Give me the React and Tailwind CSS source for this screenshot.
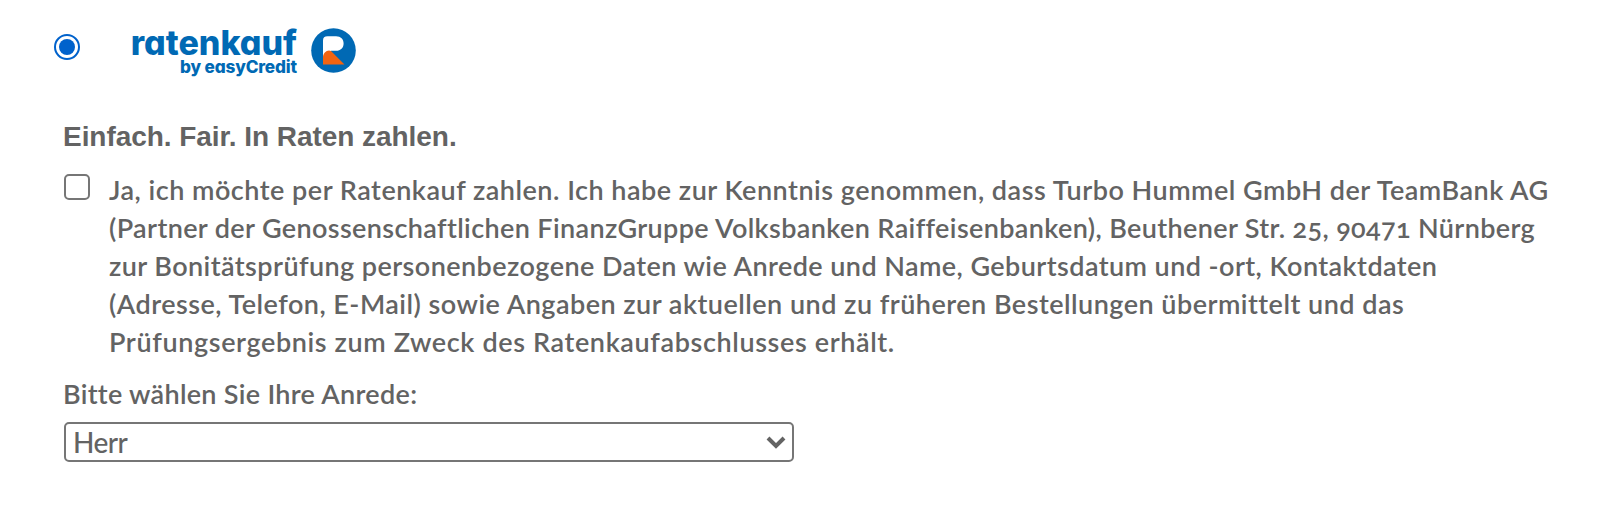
const consentLines = [
  { text: "Ja, ich möchte per Ratenkauf zahlen. Ich habe zur Kenntnis genommen, dass Turbo Hummel GmbH der TeamBank AG", tracking: "tracking-[0.5px]" },
  { text: "(Partner der Genossenschaftlichen FinanzGruppe Volksbanken Raiffeisenbanken), Beuthener Str. 25, 90471 Nürnberg", tracking: "tracking-[0.37px]" },
  { text: "zur Bonitätsprüfung personenbezogene Daten wie Anrede und Name, Geburtsdatum und -ort, Kontaktdaten", tracking: "tracking-[0.43px]" },
  { text: "(Adresse, Telefon, E-Mail) sowie Angaben zur aktuellen und zu früheren Bestellungen übermittelt und das", tracking: "tracking-[0.48px]" },
  { text: "Prüfungsergebnis zum Zweck des Ratenkaufabschlusses erhält.", tracking: "tracking-[0.62px]" },
];

function Logo() {
  return (
    <div className="flex text-[#0069b4] font-['Inter',sans-serif] [font-feature-settings:'cv11']">
      <div className="flex w-[166px] flex-col items-end pt-[4px] whitespace-nowrap">
        <span className="h-[31px] text-[34px] leading-[34px] font-extrabold">ratenkauf</span>
        <span className="text-[17.2px] leading-[20px] font-extrabold tracking-[-0.15px]">by easyCredit</span>
      </div>
      <svg className="mt-[6px] ml-[14px] size-[45px]" viewBox="0 0 45 45" aria-hidden="true">
        <circle cx="22.5" cy="22.5" r="22.3" fill="#0069b4" />
        <path d="M12 36V12.500Q12 8.300 16.500 8.300H25C29.800 8.300 32.600 11.300 32.600 15.500C32.600 19.800 29.800 22.800 25 22.800H20L14 30Z" fill="#fff" />
        <path d="M12 36.500V29.500C12 25.500 15 22.600 18 22.600C19.500 22.600 20.500 23.400 21.500 24.500L33.500 36.500Z" fill="#f26411" />
      </svg>
    </div>
  );
}

export default function App() {
  return (
    <main className="h-[508px] w-[1612px] overflow-hidden bg-white font-['Lato',sans-serif] text-[#636363]">
      <header className="flex h-[78px] pt-[22px] pl-[54px]">
        <label className="mt-[12px] mr-[51px] flex size-[26px] items-center justify-center rounded-full border-2 border-[#0062cc]">
          <span className="size-4 rounded-full bg-[#0062cc]" />
        </label>
        <Logo />
      </header>

      <section className="pt-[43px] pl-[63px]">
        <h2 className="h-[32px] font-['Liberation_Sans',sans-serif] text-[28px] leading-[32px] font-bold tracking-[-0.05px]">
          Einfach. Fair. In Raten zahlen.
        </h2>
        <div className="mt-[18px] flex pl-[1px]">
          <span className="mt-[3px] mr-[19px] size-[26px] shrink-0 rounded-[5px] border-2 border-[#767676]" />
          <p className="text-[27px] leading-[38px] font-semibold whitespace-nowrap [font-variant-numeric:oldstyle-nums]">
            {consentLines.map(({ text, tracking }) => (
              <span key={text} className={`block ${tracking}`}>{text}</span>
            ))}
          </p>
        </div>
        <p className="mt-[14px] text-[27px] leading-[38px] font-semibold tracking-[0.3px]">Bitte wählen Sie Ihre Anrede:</p>
        <div className="mt-[9px] ml-[1px] flex h-[40px] w-[730px] items-center justify-between rounded-[5px] border-2 border-[#767676] pr-[6px] pl-[7px]">
          <span className="text-[28px] leading-[36px] font-medium tracking-[-0.5px]">Herr</span>
          <svg className="h-[14px] w-[20px]" viewBox="0 0 20 14" fill="none" aria-hidden="true">
            <path d="M2 3L10 11L18 3" stroke="#636363" strokeWidth="4" />
          </svg>
        </div>
      </section>
    </main>
  );
}
